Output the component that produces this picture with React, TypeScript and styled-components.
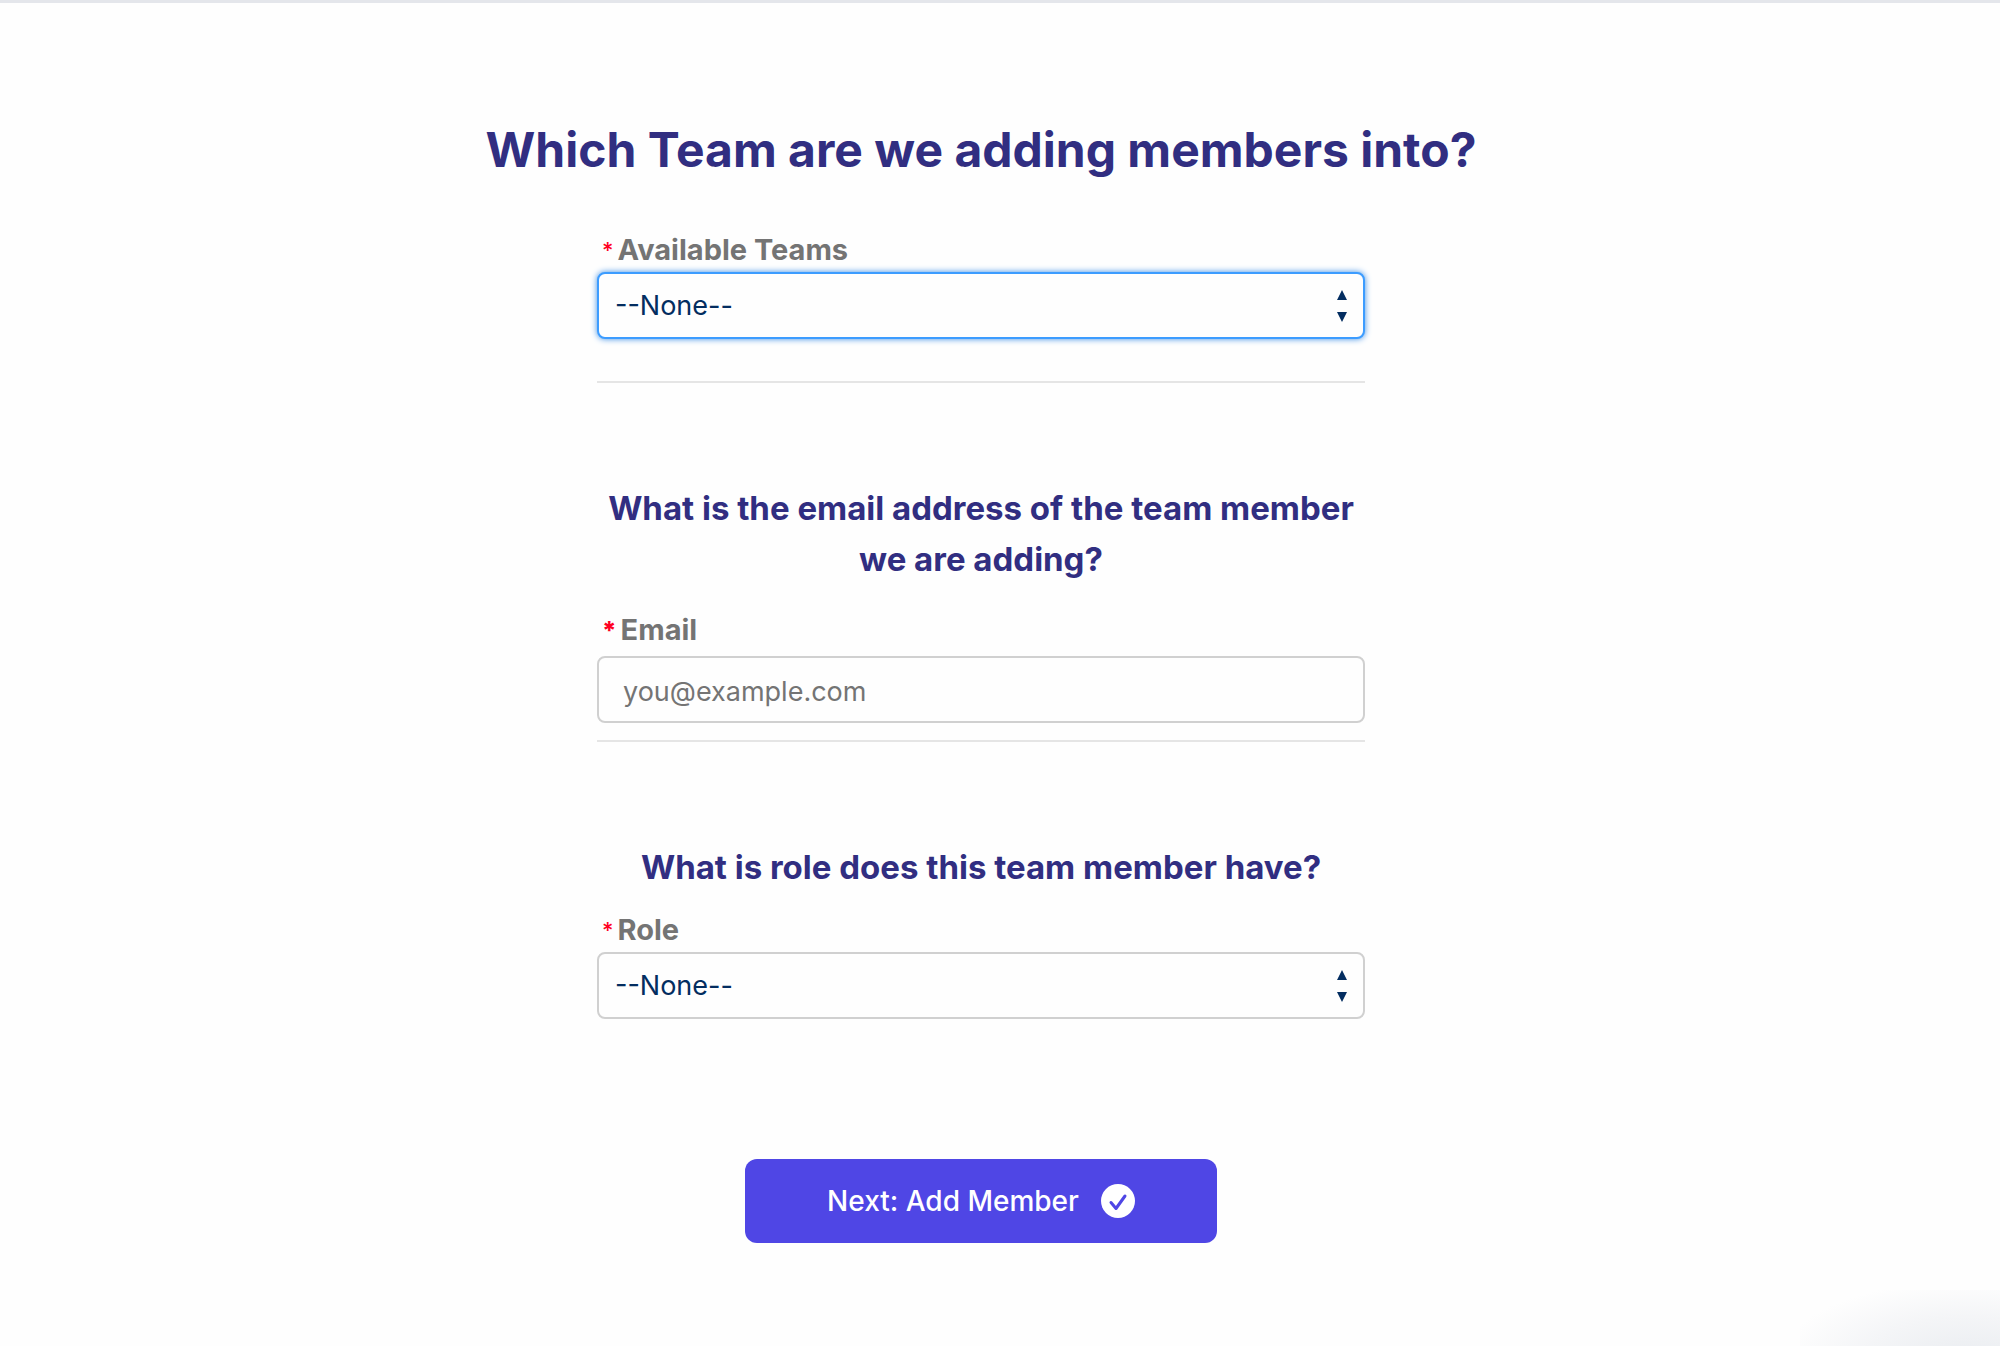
import React from "react";
import styled, { createGlobalStyle } from "styled-components";

const GlobalStyle = createGlobalStyle`
  *, *::before, *::after { box-sizing: border-box; }
  body {
    margin: 0;
    background: #fefefe;
    font-family: Inter, "Liberation Sans", sans-serif;
    color: #032d60;
  }
`;

const Page = styled.div`
  position: relative;
  min-height: 100vh;
  overflow: hidden;
  border-top: 3px solid #e4e6eb;
  padding: 112px 38px 96px 0;
`;

const CornerShade = styled.div`
  position: absolute;
  right: 0;
  bottom: 0;
  width: 200px;
  height: 56px;
  background: radial-gradient(ellipse at 85% 130%, #e9ecf0 0%, #f4f5f7 45%, rgba(254, 254, 254, 0) 80%);
  pointer-events: none;
`;

const Form = styled.form`
  display: flex;
  flex-direction: column;
  align-items: center;
`;

const Title = styled.h1`
  margin: 0 0 45px;
  font-size: 48px;
  line-height: 70px;
  font-weight: 700;
  text-align: center;
  color: #312e81;
`;

const Section = styled.section<{ $divided?: boolean; $space: number }>`
  width: 100%;
  max-width: 768px;
  padding-bottom: ${(p) => p.$space}px;
  border-bottom: ${(p) => (p.$divided ? "2px solid #e5e5e5" : "0")};
`;

const Question = styled.h2<{ $space: number }>`
  margin: 100px 0 ${(p) => p.$space}px;
  font-size: 33px;
  line-height: 51px;
  font-weight: 700;
  text-align: center;
  color: #312e81;
`;

const Label = styled.label<{ $space: number }>`
  display: flex;
  align-items: center;
  gap: 4px;
  margin-bottom: ${(p) => p.$space}px;
  padding-left: 5px;
  font-size: 29px;
  line-height: 40px;
  font-weight: 700;
  color: #747474;
`;

const Required = styled.span<{ $strong?: boolean }>`
  font-size: ${(p) => (p.$strong ? 25 : 22)}px;
  font-weight: ${(p) => (p.$strong ? 800 : 500)};
  color: #ff0022;
`;

const Control = styled.div`
  position: relative;
`;

const Select = styled.select<{ $active?: boolean }>`
  display: block;
  appearance: none;
  width: 100%;
  height: 67px;
  padding: 0 48px 0 16px;
  border: ${(p) => (p.$active ? "2px solid #3c9cff" : "2px solid #d0d0d0")};
  border-radius: 8px;
  outline: none;
  background: #fefefe;
  box-shadow: ${(p) => (p.$active ? "0 0 6px #3b8ee6" : "none")};
  font-family: inherit;
  font-size: 27px;
  color: #032d60;
`;

const Arrows = styled.svg`
  position: absolute;
  top: 18px;
  right: 18px;
  width: 10px;
  height: 32px;
  fill: #032d60;
  pointer-events: none;
`;

const TextInput = styled.input`
  display: block;
  width: 100%;
  height: 67px;
  padding: 4px 24px 0;
  border: 2px solid #d0d0d0;
  border-radius: 8px;
  background: #fefefe;
  font-family: inherit;
  font-size: 27px;
  color: #032d60;
  &::placeholder {
    color: #747474;
    opacity: 1;
  }
`;

const SubmitButton = styled.button`
  display: flex;
  align-items: center;
  justify-content: center;
  gap: 22px;
  width: 472px;
  max-width: 100%;
  height: 84px;
  margin-top: 140px;
  padding: 0;
  border: 0;
  border-radius: 12px;
  background: #4f46e5;
  font-family: inherit;
  font-size: 28px;
  font-weight: 500;
  color: #ffffff;
`;

const CheckIcon = styled.svg`
  width: 34px;
  height: 34px;
`;

type PicklistProps = { id: string; label: string; active?: boolean };

function Picklist({ id, label, active }: PicklistProps) {
  return (
    <>
      <Label htmlFor={id} $space={2}>
        <Required>*</Required>
        {label}
      </Label>
      <Control>
        <Select id={id} $active={active} required>
          <option>--None--</option>
        </Select>
        <Arrows viewBox="0 0 10 32" aria-hidden="true">
          <path d="M5 0 10 10H0ZM0 22H10L5 32Z" />
        </Arrows>
      </Control>
    </>
  );
}

export default function App() {
  return (
    <Page>
      <GlobalStyle />
      <Form onSubmit={(e: React.FormEvent) => e.preventDefault()}>
        <Title>Which Team are we adding members into?</Title>
        <Section $divided $space={42}>
          <Picklist id="team" label="Available Teams" active />
        </Section>
        <Section $divided $space={17}>
          <Question $space={25}>What is the email address of the team member we are adding?</Question>
          <Label htmlFor="email" $space={6}>
            <Required $strong>*</Required>
            Email
          </Label>
          <TextInput id="email" type="email" placeholder="you@example.com" required />
        </Section>
        <Section $space={0}>
          <Question $space={17}>What is role does this team member have?</Question>
          <Picklist id="role" label="Role" />
        </Section>
        <SubmitButton type="submit">
          Next: Add Member
          <CheckIcon viewBox="0 0 34 34" aria-hidden="true">
            <circle cx="17" cy="17" r="17" fill="#ffffff" />
            <path d="M10 18.500 15 24.500 24 12" fill="none" stroke="#4f46e5" strokeWidth="3" strokeLinecap="round" strokeLinejoin="round" />
          </CheckIcon>
        </SubmitButton>
      </Form>
      <CornerShade />
    </Page>
  );
}
